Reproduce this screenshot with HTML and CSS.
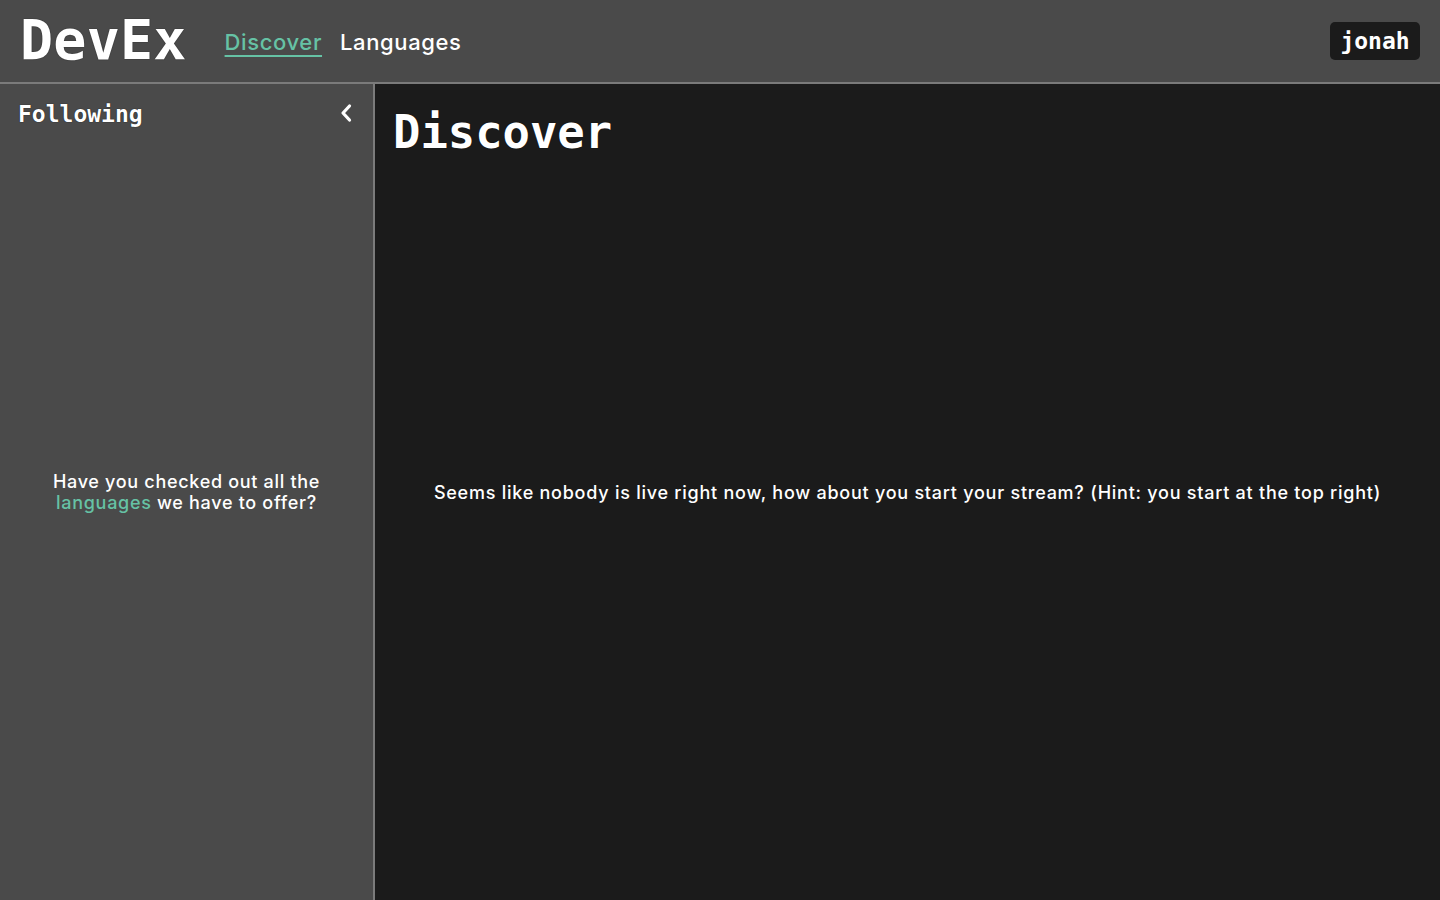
FILE: index.html
```html
<!DOCTYPE html>
<html lang="en">
<head>
<meta charset="utf-8">
<title>DevEx</title>
<link rel="stylesheet" href="styles.css">
</head>
<body>
<header class="topbar">
  <div class="brand">DevEx</div>
  <nav class="nav">
    <a class="nav-link active" href="#">Discover</a>
    <a class="nav-link" href="#">Languages</a>
  </nav>
  <button class="user-btn">jonah</button>
</header>
<div class="layout">
  <aside class="sidebar">
    <div class="sidebar-head">
      <h2 class="sidebar-title">Following</h2>
      <button class="collapse-btn" aria-label="Collapse">
        <svg width="14" height="20" viewBox="0 0 14 20"><path d="M10.5 3 L4 10 L10.5 17" fill="none" stroke="#fff" stroke-width="3.2" stroke-linecap="round" stroke-linejoin="round"/></svg>
      </button>
    </div>
    <p class="sidebar-msg">Have you checked out all the <a class="accent" href="#">languages</a> we have to offer?</p>
  </aside>
  <main class="main">
    <h1 class="page-title">Discover</h1>
    <p class="empty-msg">Seems like nobody is live right now, how about you start your stream? (Hint: you start at the top right)</p>
  </main>
</div>
</body>
</html>
```
FILE: styles.css
```css
* { box-sizing: border-box; }
html, body { margin: 0; padding: 0; height: 100%; }
body {
  background: #1b1b1b;
  color: #fff;
  font-family: "Inter", "Open Sans", sans-serif;
  font-weight: 500;
  overflow: hidden;
}
.topbar {
  height: 84px;
  background: #4a4a4a;
  border-bottom: 2px solid #7b7b7b;
  display: flex;
  align-items: center;
  padding: 0 20px 0 20px;
}
.brand {
  font-family: "DejaVu Sans Mono", monospace;
  font-weight: bold;
  font-size: 55px;
  line-height: 1;
  letter-spacing: 0.2px;
  margin-top: -2px;
  text-shadow: 0 0 1px #000;
}
.nav {
  display: flex;
  gap: 18px;
  margin-left: 38px;
  margin-top: 1px;
}
.nav-link {
  color: #fff;
  text-decoration: none;
  font-size: 22px;
  letter-spacing: 0.62px;
}
.nav-link.active {
  color: #66c2a5;
  text-decoration: underline;
  text-underline-offset: 5px;
  text-decoration-thickness: 2px;
}
.user-btn {
  margin-left: auto;
  background: #1b1b1b;
  color: #fff;
  border: none;
  border-radius: 5px;
  height: 38px;
  width: 90px;
  font-family: "DejaVu Sans Mono", monospace;
  font-weight: bold;
  font-size: 23px;
  padding: 0;
  margin-top: -1px;
}
.layout {
  display: flex;
  height: calc(100% - 84px);
}
.sidebar {
  width: 375px;
  flex: none;
  background: #4a4a4a;
  border-right: 2px solid #7b7b7b;
  display: grid;
}
.sidebar-head, .sidebar-msg { grid-area: 1 / 1; }
.sidebar-head {
  align-self: start;
  display: flex;
  align-items: center;
  justify-content: space-between;
  padding: 17px 18px 0 18px;
}
.sidebar-title {
  margin: 0;
  font-family: "DejaVu Sans Mono", monospace;
  font-weight: bold;
  font-size: 23px;
  text-shadow: 0 0 1px #000;
}
.collapse-btn {
  background: none;
  border: none;
  padding: 0;
  display: flex;
  margin-right: 2px;
  margin-top: -3px;
}
.sidebar-msg {
  align-self: center;
  justify-self: center;
  margin: 0;
  text-align: center;
  font-size: 18px;
  line-height: 21px;
  letter-spacing: 0.69px;
  width: 300px;
}
.accent { color: #66c2a5; text-decoration: none; }
.main {
  flex: 1;
  display: grid;
}
.page-title, .empty-msg { grid-area: 1 / 1; }
.page-title {
  align-self: start;
  margin: 0;
  padding: 22px 0 0 18px;
  font-family: "DejaVu Sans Mono", monospace;
  font-weight: bold;
  font-size: 45.5px;
  text-shadow: 0 0 1px #000;
}
.empty-msg {
  align-self: center;
  justify-self: center;
  margin: 0;
  font-size: 18px;
  letter-spacing: 0.75px;
}
```
